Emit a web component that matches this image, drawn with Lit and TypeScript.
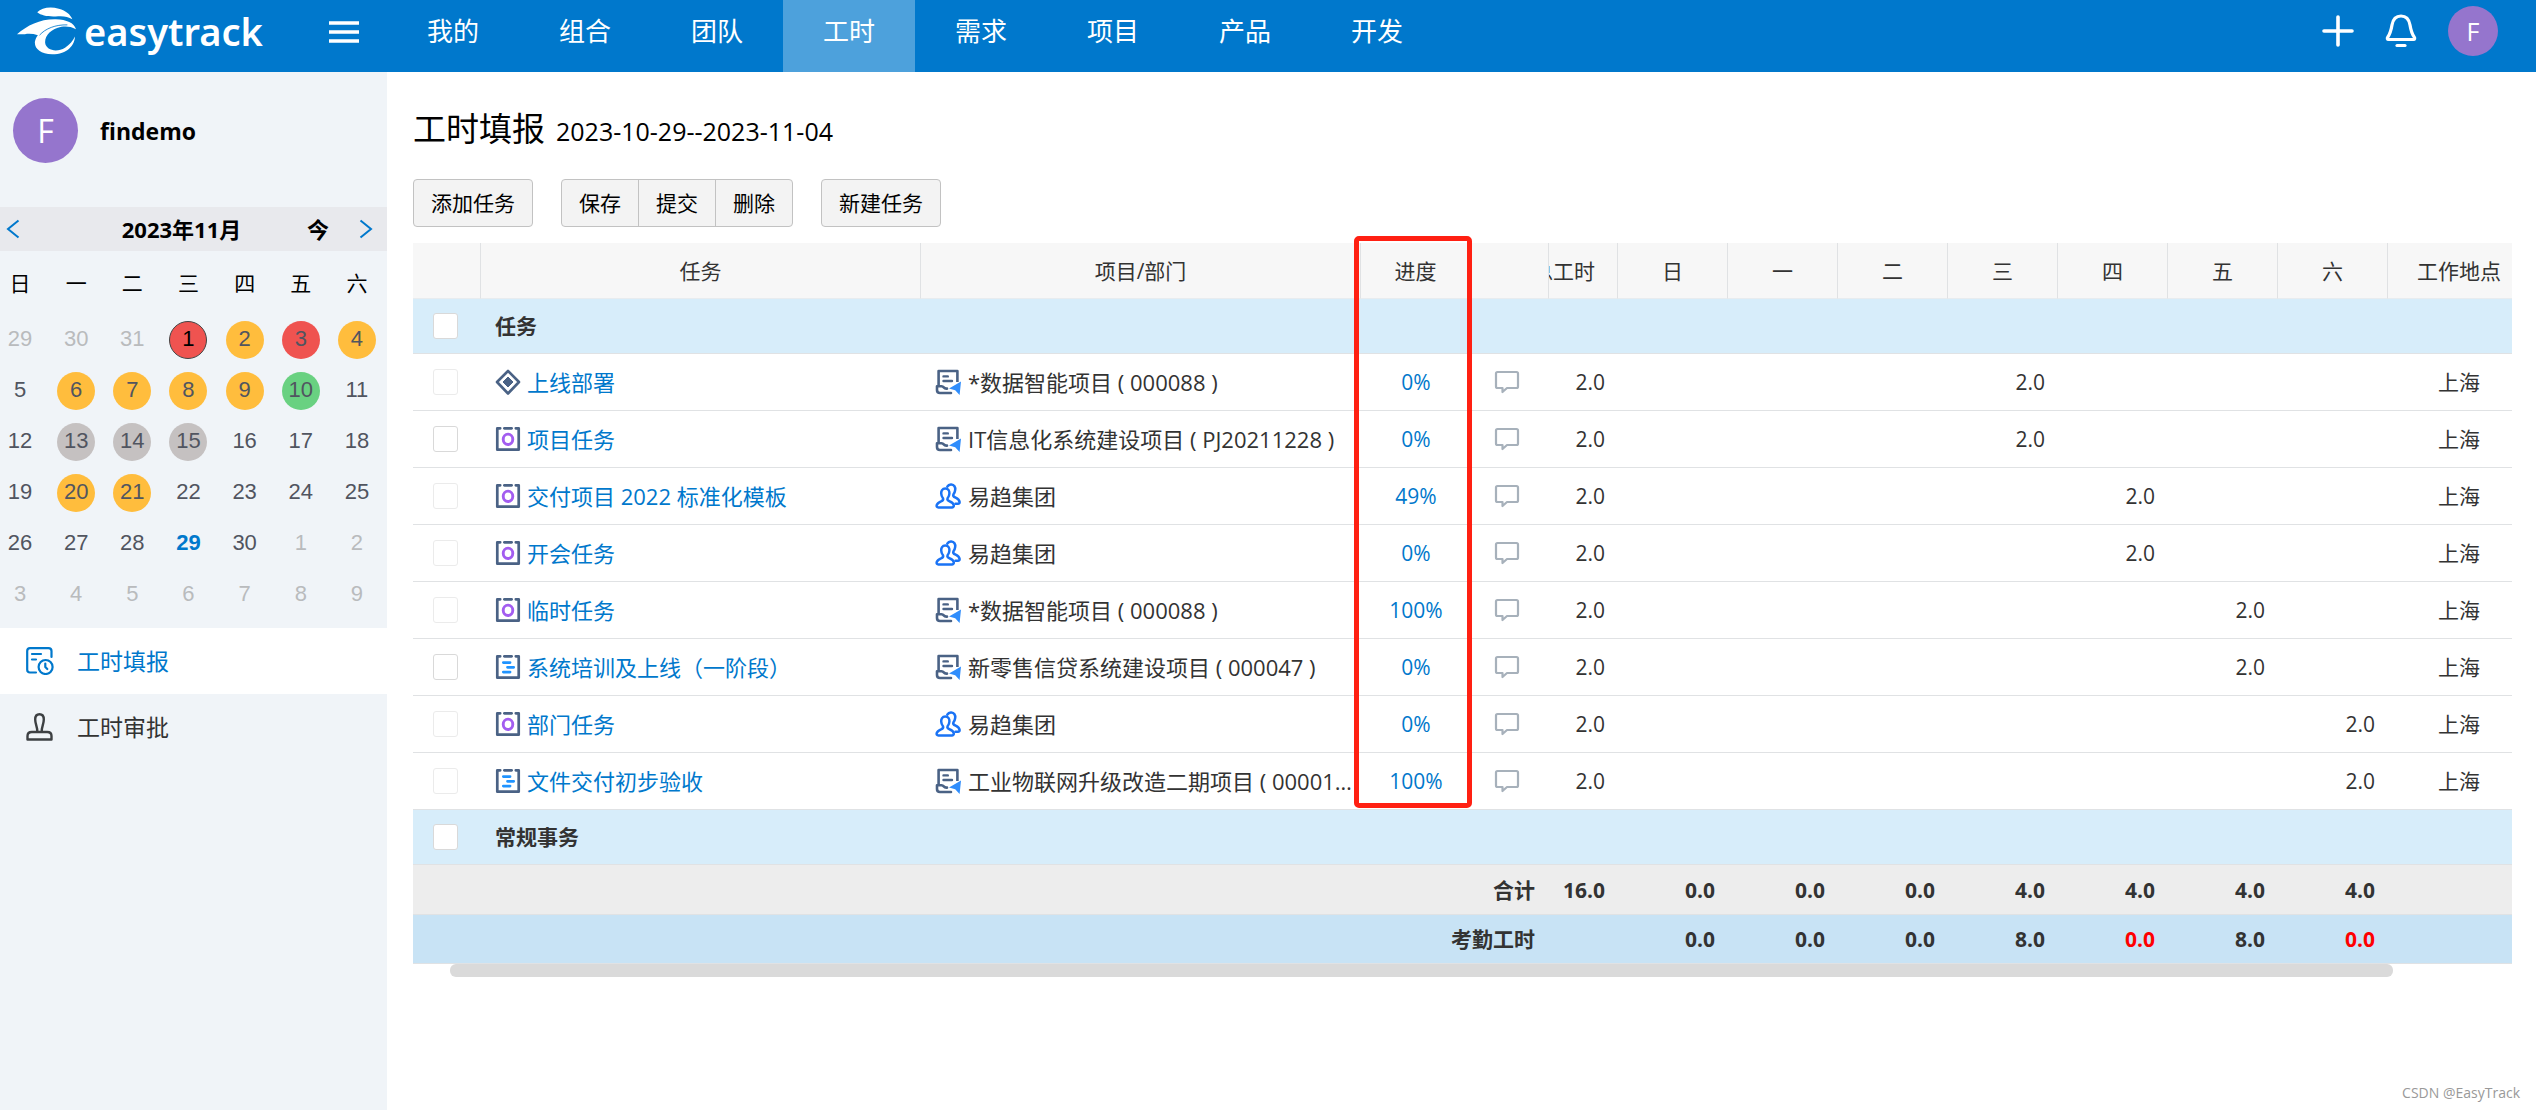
import { LitElement, html, svg, css, nothing } from "lit";
import { customElement, property } from "lit/decorators.js";
import { classMap } from "lit/directives/class-map.js";

type TaskKind = "milestone" | "activity" | "plan";
type OwnerKind = "project" | "department";

interface TaskRow {
  name: string;
  kind: TaskKind;
  owner: string;
  ownerKind: OwnerKind;
  progress: string;
  day: number;
  editable: boolean;
}

const NAV = ["我的", "组合", "团队", "工时", "需求", "项目", "产品", "开发"];
const DAYS = ["日", "一", "二", "三", "四", "五", "六"];

const TASKS: TaskRow[] = [
  { name: "上线部署", kind: "milestone", owner: "*数据智能项目 ( 000088 )", ownerKind: "project", progress: "0%", day: 3, editable: false },
  { name: "项目任务", kind: "activity", owner: "IT信息化系统建设项目 ( PJ20211228 )", ownerKind: "project", progress: "0%", day: 3, editable: true },
  { name: "交付项目 2022 标准化模板", kind: "activity", owner: "易趋集团", ownerKind: "department", progress: "49%", day: 4, editable: false },
  { name: "开会任务", kind: "activity", owner: "易趋集团", ownerKind: "department", progress: "0%", day: 4, editable: false },
  { name: "临时任务", kind: "activity", owner: "*数据智能项目 ( 000088 )", ownerKind: "project", progress: "100%", day: 5, editable: false },
  { name: "系统培训及上线（一阶段）", kind: "plan", owner: "新零售信贷系统建设项目 ( 000047 )", ownerKind: "project", progress: "0%", day: 5, editable: true },
  { name: "部门任务", kind: "activity", owner: "易趋集团", ownerKind: "department", progress: "0%", day: 6, editable: false },
  { name: "文件交付初步验收", kind: "plan", owner: "工业物联网升级改造二期项目 ( 000018 )", ownerKind: "project", progress: "100%", day: 6, editable: false },
];

const TOTALS = ["0.0", "0.0", "0.0", "4.0", "4.0", "4.0", "4.0"];
const ATTENDANCE = ["0.0", "0.0", "0.0", "8.0", "0.0", "8.0", "0.0"];

const MARKS: Record<number, string> = {
  1: "red selected", 2: "amber", 3: "red", 4: "amber",
  6: "amber", 7: "amber", 8: "amber", 9: "amber", 10: "green",
  13: "grey", 14: "grey", 15: "grey", 20: "amber", 21: "amber", 29: "today",
};

const SLATE = "#4a6285";

const frame = svg`
  <path d="M5 2.2H2.2V22.8H22.8V2.2H20" fill="none" stroke=${SLATE} stroke-width="2.6" stroke-linejoin="round" stroke-linecap="round"/>
  <path d="M9 2.2H16" stroke=${SLATE} stroke-width="2.6" stroke-linecap="round"/>`;

const icons = {
  milestone: html`<svg viewBox="0 0 26 26" width="26" height="26" aria-hidden="true">
    <path d="M13 2L24 13L13 24.500L2 13Z" fill="none" stroke=${SLATE} stroke-width="2.600" stroke-linejoin="round"/>
    <path d="M13 8L18 13L13 18L8 13Z" fill=${SLATE} stroke=${SLATE} stroke-width="1" stroke-linejoin="round"/></svg>`,
  activity: html`<svg viewBox="0 0 25 25" width="26" height="26" aria-hidden="true">${frame}
    <ellipse cx="12.500" cy="12.800" rx="4.600" ry="5" fill="none" stroke="#a35df0" stroke-width="2.800"/></svg>`,
  plan: html`<svg viewBox="0 0 25 25" width="26" height="26" aria-hidden="true">${frame}
    <path d="M8 8.200H14.500M12 12.800H18M8 17.400H14.500" stroke="#1f93ff" stroke-width="2.600" stroke-linecap="round"/></svg>`,
  project: html`<svg viewBox="0 0 26 26" width="26" height="26" aria-hidden="true">
    <path d="M3.600 16V2H22.400V13" fill="none" stroke=${SLATE} stroke-width="2.600" stroke-linejoin="round"/>
    <path d="M8.500 7.400H12.800M8.500 12H17" stroke=${SLATE} stroke-width="2.400" stroke-linecap="round"/>
    <path d="M12 19.600C8 20 9.500 17.200 6.500 17.200H2V21C2 23 3 24 5 24H16" fill="none" stroke=${SLATE} stroke-width="2.600" stroke-linejoin="round" stroke-linecap="round"/>
    <path d="M26 12.500L14 19.600L20.200 21.200L24.600 26Z" fill="#2f8dfc"/></svg>`,
  department: html`<svg viewBox="0 0 26 26" width="26" height="26" aria-hidden="true">
    <g fill="none" stroke="#1a73f5" stroke-width="2.500" stroke-linejoin="round" stroke-linecap="round">
    <path d="M10.300 5.600C13.500 5.600 14.600 8 14.400 10.500C14.300 12.800 13.500 14 12.600 15.200C11.800 16.800 13 17.600 15 18.500C17.600 19.600 18.600 20.500 18.800 22.500C18.900 23.700 18 24.400 17 24.400H3.400C2 24.400 1.300 23.500 1.700 22.200C2.300 20.300 3.600 19.400 6 18.400C7.800 17.600 8.700 16.800 8 15.200C7 14 6.300 12.700 6.200 10.500C6.100 8 7.200 5.600 10.300 5.600Z"/>
    <path d="M12.300 3.700C13.200 2 14.500 1.400 16.200 1.500C19.300 1.700 20.500 4 20.200 6.800C20 9 19.200 10.200 18.400 11.400C17.700 13 18.600 13.800 20.600 14.700C23.100 15.900 24.300 16.900 24.600 19C24.700 20 24.200 20.700 23 20.700H20.500"/></g></svg>`,
  comment: html`<svg viewBox="0 0 26 24" width="26" height="24" aria-hidden="true">
    <path d="M3.500 2H22.500Q24 2 24 3.500V16.500Q24 18 22.500 18H13L8.500 22V18H3.500Q2 18 2 16.500V3.500Q2 2 3.500 2Z" fill="none" stroke="#a7b1bb" stroke-width="2.200" stroke-linejoin="round"/></svg>`,
  fill: html`<svg viewBox="0 0 28 28" width="28" height="28" aria-hidden="true">
    <g fill="none" stroke="#0078cc" stroke-width="2.200" stroke-linecap="round" stroke-linejoin="round">
    <path d="M10 25.500H4Q1.200 25.500 1.200 22.700V4Q1.200 1.200 4 1.200H22.500Q25.500 1.200 25.500 4V10"/>
    <path d="M6 7H15M6 12.500H10"/><circle cx="19.600" cy="20" r="7"/><path d="M19.300 16.500V20L21.300 22"/></g></svg>`,
  stamp: html`<svg viewBox="0 0 28 28" width="28" height="28" aria-hidden="true">
    <g fill="none" stroke="#3d4043" stroke-width="2.400" stroke-linecap="round" stroke-linejoin="round">
    <path d="M11.300 18.500C11.500 14 9.200 11 9.200 6.500C9.200 3.300 11 1.300 13.500 1.300C16 1.300 17.800 3.300 17.800 6.500C17.800 11 15.500 14 15.700 18.500"/>
    <path d="M1.500 26.500V23C1.500 20.500 3.300 19 5.800 19H21.200C23.700 19 25.500 20.500 25.500 23V26.500Z"/></g></svg>`,
  plus: html`<svg viewBox="0 0 32 32" width="32" height="32" aria-hidden="true">
    <path d="M16 2V30M2 16H30" stroke="#fff" stroke-width="3.600" stroke-linecap="round"/></svg>`,
  bell: html`<svg viewBox="0 0 32 34" width="32" height="34" aria-hidden="true">
    <g fill="none" stroke="#fff" stroke-width="3.200" stroke-linecap="round" stroke-linejoin="round">
    <path d="M3.600 25.500H28.400C29.800 25.500 30 24.200 29.300 23.200C26.300 19 25.800 16 25 11C24 5 20.500 2 16 2C11.500 2 8 5 7 11C6.200 16 5.700 19 2.700 23.200C2 24.200 2.200 25.500 3.600 25.500Z"/>
    <path d="M12 31.500H20"/></g></svg>`,
  menu: html`<svg viewBox="0 0 30 22" width="30" height="22" aria-hidden="true">
    <path d="M0 2H30M0 11H30M0 20H30" stroke="#fff" stroke-width="3.600"/></svg>`,
  prev: html`<svg viewBox="0 0 14 20" width="14" height="20" aria-hidden="true">
    <path d="M12.500 1.500L2 10L12.500 18.500" fill="none" stroke="#0078cc" stroke-width="2"/></svg>`,
  next: html`<svg viewBox="0 0 14 20" width="14" height="20" aria-hidden="true">
    <path d="M1.500 1.500L12 10L1.500 18.500" fill="none" stroke="#0078cc" stroke-width="2"/></svg>`,
  logo: html`<svg viewBox="48 20 178 143" width="59" height="48" aria-hidden="true">
    <g fill="#fff"><path d="M109 35C122 21 148 17 174 24C196 30 209 41 215 56C202 48 190 46 172 47C146 49 122 46 109 35Z"/>
    <path d="M48 101C80 74 118 55 165 56C198 57 220 67 226 86C210 78 196 77 182 79C150 86 131 106 133 128C136 150 168 157 193 142C207 133 216 121 223 108C222 134 200 162 154 162C119 161 100 144 102 124C103 117 106 110 111 104C98 100 84 99 72 101Z"/></g>
    <path d="M116 104C134 84 164 72 200 73" fill="none" stroke="#0078cc" stroke-width="2.500"/></svg>`,
};

const reset = css`
  * { box-sizing: border-box; }
  button { margin: 0; padding: 0; border: 0; background: none; color: inherit; font: inherit; cursor: pointer; }
  a { color: inherit; text-decoration: none; }
  svg { display: block; flex: none; }
`;

@customElement("top-bar")
class TopBar extends LitElement {
  static styles = [reset, css`
    :host { display: block; background: #0078cc; color: #fff; }
    .bar { display: flex; height: 72px; }
    .logo { display: flex; align-items: center; gap: 8px; height: 62px; padding-left: 17px; width: 329px; font: 600 38px/56px "Noto Sans", sans-serif; }
    .menu { display: flex; align-items: center; height: 64px; }
    nav { display: flex; margin-left: 28px; }
    .item { padding: 0 40px; font-size: 26px; line-height: 62px; }
    .item.active { background: #4da1dc; }
    .tools { display: flex; align-items: center; gap: 31px; height: 61px; margin-left: auto; padding-right: 38px; }
    .avatar { width: 50px; height: 50px; border-radius: 50%; background: #9575cd; font-size: 25px; line-height: 50px; text-align: center; }
    .tool { display: flex; }
  `];
  render() {
    return html`<header class="bar">
      <a class="logo" href="#">${icons.logo}<span>easytrack</span></a>
      <button class="menu" aria-label="菜单">${icons.menu}</button>
      <nav>${NAV.map((n) => html`<a href="#" class=${classMap({ item: true, active: n === "工时" })}>${n}</a>`)}</nav>
      <div class="tools">
        <button class="tool" aria-label="新建">${icons.plus}</button>
        <button class="tool" aria-label="通知">${icons.bell}</button>
        <button class="avatar">F</button>
      </div>
    </header>`;
  }
}

@customElement("month-calendar")
class MonthCalendar extends LitElement {
  static styles = [reset, css`
    :host { display: block; overflow: hidden; padding-bottom: 8px; }
    .head { display: grid; grid-template-columns: 70px 1fr 50px 44px; align-items: center; height: 44px; background: #e8e9ed; font-weight: 700; font-size: 22px; line-height: 42px; text-align: center; }
    .prev { padding-left: 6px; }
    .next { padding-left: 16px; }
    table { width: calc(100% + 6px); margin-left: -8px; border-collapse: collapse; table-layout: fixed; }
    th { height: 63px; padding: 0 0 2px; font-weight: 400; font-size: 21px; }
    td { height: 51px; padding: 0; font: 22px/36px "Liberation Sans", sans-serif; color: #515560; }
    .day { display: block; width: 38px; height: 38px; margin: 0 auto; padding-bottom: 2px; border-radius: 50%; text-align: center; }
    .out { color: #b9bbbd; }
    .red { background: #ef5350; }
    .amber { background: #ffbd3d; }
    .green { background: #69d181; }
    .grey { background: #c5c1c1; }
    .selected { border: 1px solid #444; color: #000; line-height: 34px; }
    .today { color: #0078cc; font-weight: 700; }
  `];
  render() {
    const cells = Array.from({ length: 42 }, (_, i) => {
      const d = i - 2;
      if (d < 1) return { n: d + 31, cls: "out" };
      if (d > 30) return { n: d - 30, cls: "out" };
      return { n: d, cls: MARKS[d] ?? "" };
    });
    const weeks = [0, 1, 2, 3, 4, 5].map((w) => cells.slice(w * 7, w * 7 + 7));
    return html`
      <div class="head">
        <button class="prev" aria-label="上个月">${icons.prev}</button>
        <span class="title">2023年11月</span>
        <button>今</button>
        <button class="next" aria-label="下个月">${icons.next}</button>
      </div>
      <table>
        <thead><tr>${DAYS.map((d) => html`<th>${d}</th>`)}</tr></thead>
        <tbody>${weeks.map((w) => html`<tr>${w.map((c) => html`<td><button class="day ${c.cls}">${c.n}</button></td>`)}</tr>`)}</tbody>
      </table>`;
  }
}

@customElement("side-panel")
class SidePanel extends LitElement {
  static styles = [reset, css`
    :host { display: block; background: #f0f4f8; }
    .user { display: flex; align-items: center; gap: 22px; height: 135px; padding: 0 13px 18px; font-weight: 700; font-size: 23px; }
    .avatar { width: 65px; height: 65px; border-radius: 50%; background: #9575cd; color: #fff; font-size: 32px; font-weight: 400; line-height: 65px; text-align: center; }
    .link { display: flex; align-items: center; gap: 23px; height: 66px; padding-left: 26px; font-size: 23px; line-height: 34px; color: #333; }
    .link.active { background: #fff; color: #0078cc; }
  `];
  render() {
    return html`
      <div class="user"><span class="avatar">F</span><span>findemo</span></div>
      <month-calendar></month-calendar>
      <nav>
        <a class="link active" href="#">${icons.fill}<span>工时填报</span></a>
        <a class="link" href="#">${icons.stamp}<span>工时审批</span></a>
      </nav>`;
  }
}

@customElement("timesheet-table")
class TimesheetTable extends LitElement {
  @property({ attribute: false }) rows: TaskRow[] = TASKS;

  static styles = [reset, css`
    :host { display: block; color: #333; font-size: 21px; line-height: 30px; }
    table { width: 100%; border-collapse: separate; border-spacing: 0; table-layout: fixed; }
    .c-check { width: 68px; }
    .c-progress { width: 110px; }
    .c-note { width: 78px; }
    .c-total { width: 69px; }
    .c-day { width: 110px; }
    .c-place { width: 124px; }
    th, td { padding: 0; border-bottom: 1px solid #e0e2e4; white-space: nowrap; }
    thead th { height: 56px; background: #f7f7f7; border-bottom-color: #e8ecef; border-right: 1px solid #e0e2e4; font-weight: 400; }
    thead .place { border-right: 0; }
    tbody td { height: 57px; }
    .group td, .group th { height: 55px; background: #d7edfa; text-align: left; }
    .clip { display: flex; justify-content: flex-end; overflow: hidden; padding-right: 22px; }
    .clip span { flex: none; }
    .check { padding-left: 20px; }
    input { display: block; appearance: none; width: 25px; height: 26px; margin: 0; border: 1px solid #d9d9d9; border-radius: 3px; background: #fff; }
    input:disabled { border-color: #ebebeb; }
    .cell { display: flex; align-items: center; height: 30px; padding-left: 14px; font-size: 22px; }
    .task { gap: 6px; color: #0078cc; }
    .owner { gap: 7px; padding-right: 6px; }
    .owner .text { overflow: hidden; text-overflow: ellipsis; }
    .title { padding-left: 14px; font-weight: 700; }
    .progress { position: relative; text-align: center; }
    .progress a { color: #0078cc; }
    .note button { display: block; margin-left: 23px; }
    .num { padding-right: 13px; text-align: right; }
    .place { padding-left: 18px; text-align: center; }
    .sum th, .sum td { height: 50px; background: #ededed; font-weight: 700; }
    .attend th, .attend td { height: 49px; background: #c8e3f5; font-weight: 700; }
    .sum .label, .attend .label { padding-right: 14px; text-align: right; }
    .attend .short { color: #f00; }
    .marker { position: absolute; z-index: 1; top: -7px; left: -7px; width: 118px; height: 572px; border: 5px solid #ff2012; border-radius: 5px; pointer-events: none; }
    .scroll { height: 13px; margin: 0 119px 0 37px; border-radius: 6px; background: #dadada; }
  `];

  private row(r: TaskRow) {
    return html`<tr>
      <td class="check"><input type="checkbox" aria-label=${r.name} ?disabled=${!r.editable}></td>
      <td><a class="cell task" href="#">${icons[r.kind]}<span>${r.name}</span></a></td>
      <td><div class="cell owner">${icons[r.ownerKind]}<span class="text">${r.owner}</span></div></td>
      <td class="progress"><a href="#">${r.progress}</a></td>
      <td class="note"><button aria-label="备注">${icons.comment}</button></td>
      <td class="num">2.0</td>
      ${DAYS.map((_, i) => html`<td class="num">${i === r.day ? "2.0" : nothing}</td>`)}
      <td class="place">上海</td>
    </tr>`;
  }

  private group(name: string) {
    return html`<tr class="group">
      <td class="check"><input type="checkbox" aria-label=${name}></td>
      <th colspan="13" class="title">${name}</th>
    </tr>`;
  }

  render() {
    return html`
      <table>
        <colgroup>
          <col class="c-check"><col><col><col class="c-progress"><col class="c-note"><col class="c-total">
          ${DAYS.map(() => html`<col class="c-day">`)}<col class="c-place">
        </colgroup>
        <thead><tr>
          <th></th><th>任务</th><th>项目/部门</th>
          <th class="progress">进度<span class="marker"></span></th>
          <th></th><th><div class="clip"><span>总工时</span></div></th>
          ${DAYS.map((d) => html`<th>${d}</th>`)}
          <th class="place">工作地点</th>
        </tr></thead>
        <tbody>
          ${this.group("任务")}
          ${this.rows.map((r) => this.row(r))}
          ${this.group("常规事务")}
        </tbody>
        <tfoot>
          <tr class="sum"><th colspan="5" class="label">合计</th><td class="num">16.0</td>
            ${TOTALS.map((t) => html`<td class="num">${t}</td>`)}<td></td></tr>
          <tr class="attend"><th colspan="5" class="label">考勤工时</th><td></td>
            ${ATTENDANCE.map((t, i) => html`<td class=${classMap({ num: true, short: i > 3 && t === "0.0" })}>${t}</td>`)}<td></td></tr>
        </tfoot>
      </table>
      <div class="scroll"></div>`;
  }
}

@customElement("app-root")
class AppRoot extends LitElement {
  static styles = [reset, css`
    :host { display: flex; flex-direction: column; min-height: 100vh; background: #fff; color: #000; font-family: "Open Sans", "Noto Sans CJK SC", sans-serif; }
    .body { display: flex; flex: 1; }
    side-panel { flex: none; width: 387px; }
    main { display: flex; flex: 1; flex-direction: column; min-width: 0; padding: 35px 24px 0 26px; }
    h1 { display: flex; align-items: baseline; gap: 11px; margin: 0; font-weight: 400; font-size: 33px; line-height: 44px; }
    .range { font-size: 25px; }
    .actions { display: flex; gap: 28px; margin: 26px 0 16px; }
    .group { display: flex; border: 1px solid #c2c2c2; border-radius: 4px; background: #f3f3f3; }
    .btn { height: 46px; padding: 0 17px; font-size: 21px; line-height: 46px; }
    .btn + .btn { border-left: 1px solid #c2c2c2; }
    .credit { margin: auto -8px 6px 0; color: #999; font-size: 14px; line-height: 22px; text-align: right; }
  `];
  render() {
    const groups = [["添加任务"], ["保存", "提交", "删除"], ["新建任务"]];
    return html`
      <top-bar></top-bar>
      <div class="body">
        <side-panel></side-panel>
        <main>
          <h1>工时填报 <span class="range">2023-10-29--2023-11-04</span></h1>
          <div class="actions">${groups.map((g) => html`<div class="group">${g.map((b) => html`<button class="btn">${b}</button>`)}</div>`)}</div>
          <timesheet-table></timesheet-table>
          <footer class="credit">CSDN @EasyTrack</footer>
        </main>
      </div>`;
  }
}
